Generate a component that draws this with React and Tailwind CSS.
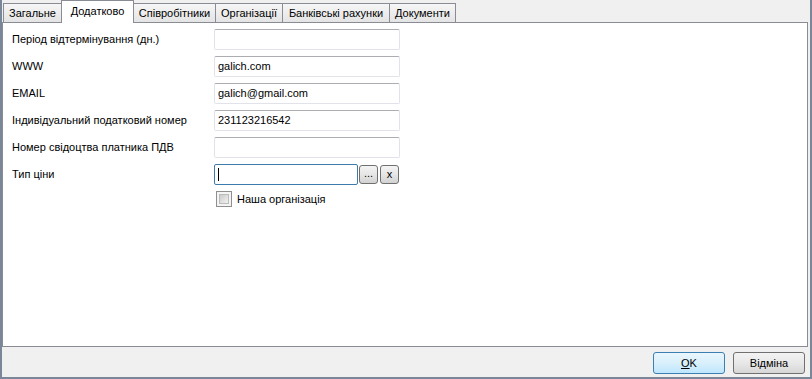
import React from "react";

const tabs = [
  { title: "Загальне", w: "w-[59px]" },
  { title: "Додатково", w: "w-[73px]", active: true },
  { title: "Співробітники", w: "w-[83px]" },
  { title: "Організації", w: "w-[68px]" },
  { title: "Банківські рахунки", w: "w-[108px]" },
  { title: "Документи", w: "w-[67px]" },
];

const rows = [
  { label: "Період відтермінування (дн.)", value: "" },
  { label: "WWW", value: "galich.com" },
  { label: "EMAIL", value: "galich@gmail.com" },
  { label: "Індивідуальний податковий номер", value: "231123216542" },
  { label: "Номер свідоцтва платника ПДВ", value: "" },
];

const TextBox = ({ value }) => (
  <div className="w-[186px] h-[21px] border border-[#e2e3ea] border-t-[#abadb3] rounded-[2px] bg-white flex items-center pl-[3px]">
    {value}
  </div>
);

const SmallButton = ({ children }) => (
  <div className="w-[19px] h-[19px] border border-[#707070] rounded-[3px] bg-linear-to-b from-[#f4f4f4] via-[#e6e6e6] to-[#d2d2d2] flex items-center justify-center leading-none">
    {children}
  </div>
);

const App = () => {
  return (
    <div className="w-[812px] h-[379px] bg-[#f0f0f0] border-l-2 border-r-2 border-b-2 border-[#7a8798] flex flex-col text-[11px] text-black font-['Liberation_Sans',Arial,sans-serif] overflow-hidden select-none">
      {/* tab strip */}
      <div className="h-[22px] flex items-end pl-[1px] shrink-0">
        {tabs.map((t, i) =>
          t.active ? (
            <div
              key={i}
              className={`${t.w} h-[23px] -mb-px -ml-px relative z-10 bg-white border border-b-0 border-[#898c95] flex items-center justify-center pb-[2px]`}
            >
              {t.title}
            </div>
          ) : (
            <div
              key={i}
              className={`${t.w} h-[19px] ${i > 0 ? "-ml-px" : ""} bg-linear-to-b from-[#f6f6f6] to-[#e4e4e4] border border-b-0 border-[#898c95] flex items-center justify-center pt-[1px]`}
            >
              {t.title}
            </div>
          )
        )}
      </div>

      {/* page */}
      <div className="w-[806px] h-[325px] bg-white border border-[#898c95] pt-[6px] pl-[9px] shrink-0">
        {rows.map((r, i) => (
          <div key={i} className="flex items-center h-[21px] mb-[6px]">
            <div className="w-[202px]">{r.label}</div>
            <TextBox value={r.value} />
          </div>
        ))}
        <div className="flex items-center h-[21px] mb-[6px]">
          <div className="w-[202px]">Тип ціни</div>
          <div className="w-[144px] h-[21px] border border-[#3d7bad] rounded-[2px] bg-white flex items-center pl-[3px]">
            <div className="w-px h-[13px] bg-black" />
          </div>
          <div className="ml-[1px] flex gap-[2px]">
            <SmallButton>
              <span className="-mt-[3px]">...</span>
            </SmallButton>
            <SmallButton>x</SmallButton>
          </div>
        </div>
        <div className="flex items-center h-[16px] pl-[204px]">
          <div className="w-[16px] h-[16px] border border-[#8f8f8f] bg-[#f4f4f4] p-[2px]">
            <div className="w-full h-full bg-linear-to-br from-[#cbcbcb] to-[#f2f2f2] border border-[#bcbcbc]" />
          </div>
          <span className="ml-[5px]">Наша організація</span>
        </div>
      </div>

      {/* buttons */}
      <div className="flex-1 flex justify-end items-start pt-[5px] pr-[5px] gap-[8px]">
        <div className="w-[72px] h-[22px] border border-[#3c7fb1] rounded-[3px] bg-linear-to-b from-[#eaf6fd] via-[#d9f0fc] to-[#bee6fd] flex items-center justify-center">
          <span>
            <span className="underline">O</span>K
          </span>
        </div>
        <div className="w-[72px] h-[22px] border border-[#707070] rounded-[3px] bg-linear-to-b from-[#f3f3f3] via-[#e8e8e8] to-[#d6d6d6] flex items-center justify-center">
          Відміна
        </div>
      </div>
    </div>
  );
};

export default App;
